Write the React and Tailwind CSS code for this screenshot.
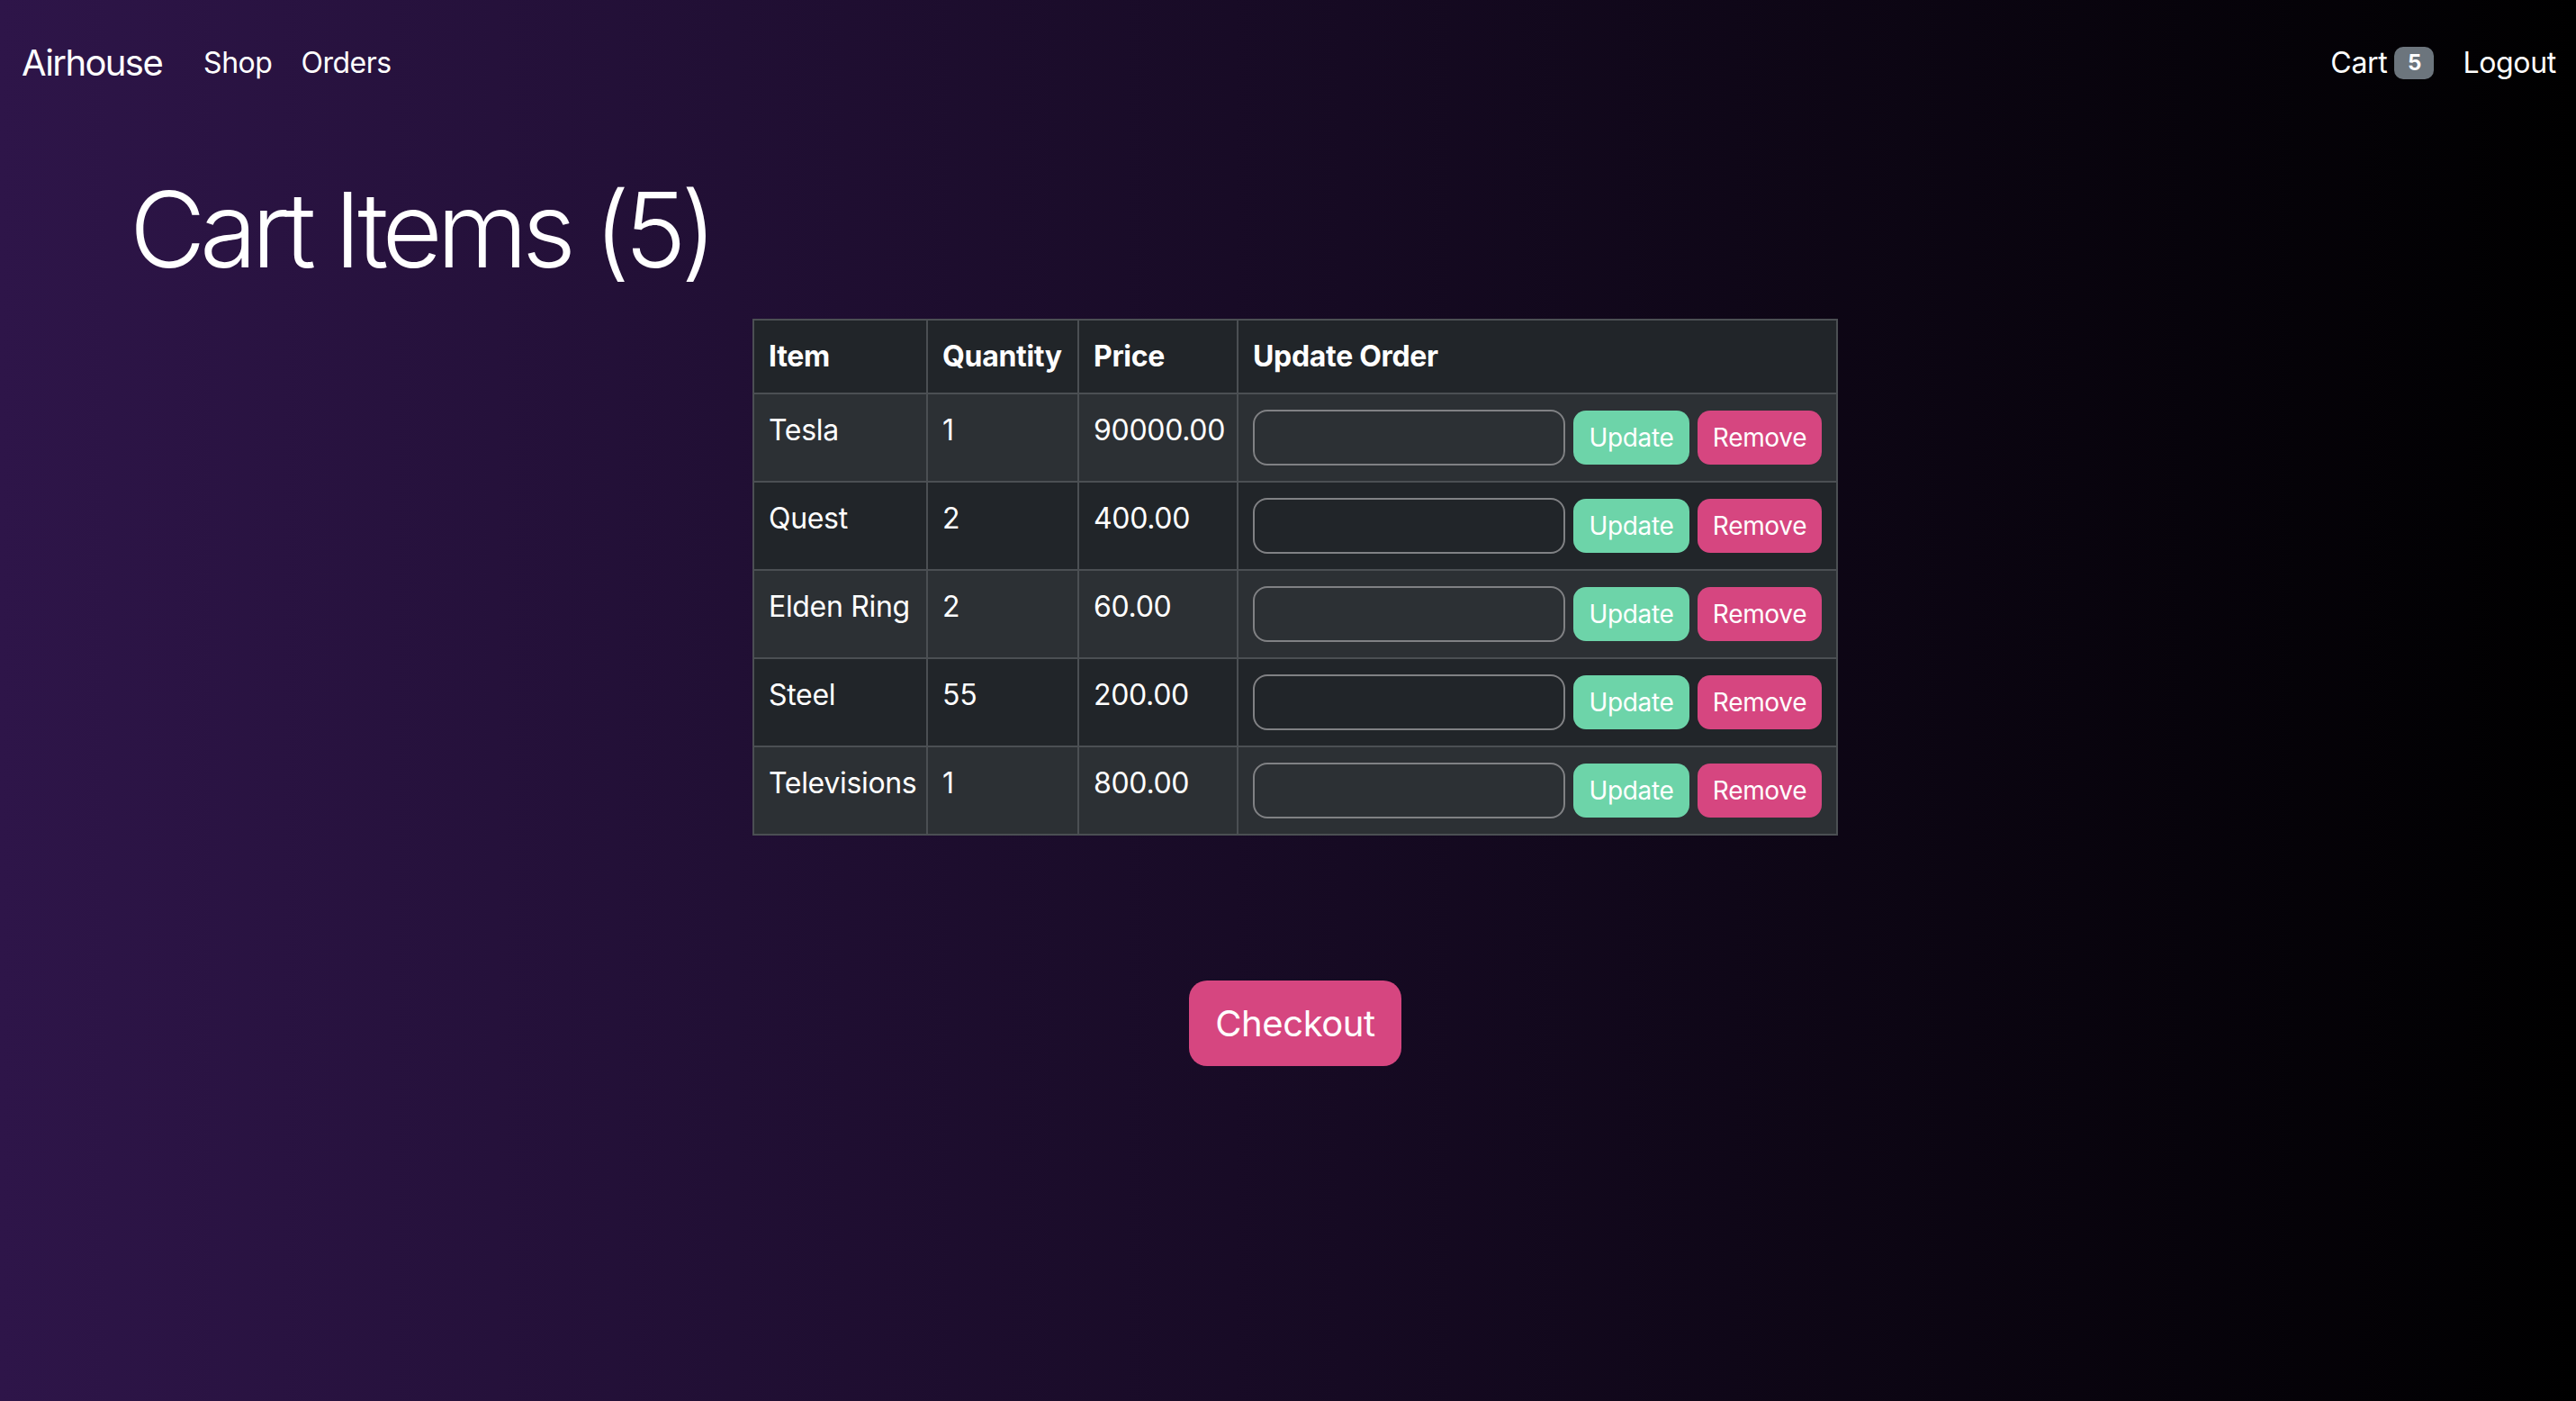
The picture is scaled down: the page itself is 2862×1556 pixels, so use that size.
import { useState } from "react";

const items = [
  { id: 1, name: "Tesla", quantity: 1, price: "90000.00" },
  { id: 2, name: "Quest", quantity: 2, price: "400.00" },
  { id: 3, name: "Elden Ring", quantity: 2, price: "60.00" },
  { id: 4, name: "Steel", quantity: 55, price: "200.00" },
  { id: 5, name: "Televisions", quantity: 1, price: "800.00" },
];

function App() {
  const [amounts, setAmounts] = useState({});

  return (
    <div className="min-h-screen w-full bg-[linear-gradient(to_right,#2e1549,#000)] font-['Inter','Liberation_Sans',sans-serif] text-white">
      {/* Navbar */}
      <nav className="flex h-[140px] items-center justify-between pl-[24px] pr-[6px]">
        <div className="flex items-center">
          <span className="mr-[30px] text-[40px] leading-[1.5] tracking-[-0.04em]">Airhouse</span>
          <a className="px-[16px] text-[32px] leading-[1.5] tracking-[-0.015em]">Shop</a>
          <a className="px-[16px] text-[32px] leading-[1.5] tracking-[-0.015em]">Orders</a>
        </div>
        <div className="flex items-center">
          <a className="flex items-center px-[16px] text-[32px] leading-[1.5] tracking-[-0.01em]">
            Cart
            <span className="ml-[8px] flex h-[36px] w-[44px] items-center justify-center rounded-[10px] bg-[#6c757d] text-[24px] font-bold leading-none">
              5
            </span>
          </a>
          <a className="px-[16px] text-[32px] leading-[1.5] tracking-[-0.01em]">Logout</a>
        </div>
      </nav>

      {/* Main Content */}
      <main>
        <h1 className="mt-[46px] mb-[29px] ml-[144px] text-[116px] font-light leading-[1.2] tracking-[-0.055em]">
          Cart Items (5)
        </h1>

        <div className="flex justify-center pl-[16px]">
          <table className="w-[1206px] table-fixed border-collapse border-2 border-[#4b4f53] text-left text-[32px] leading-[1.5] tracking-[-0.01em]">
            <thead className="bg-[#212529]">
              <tr>
                <th className="w-[193px] border-2 border-[#4b4f53] p-[16px] font-bold">Item</th>
                <th className="w-[168px] border-2 border-[#4b4f53] p-[16px] font-bold">Quantity</th>
                <th className="w-[177px] border-2 border-[#4b4f53] p-[16px] font-bold">Price</th>
                <th className="border-2 border-[#4b4f53] p-[16px] font-bold">Update Order</th>
              </tr>
            </thead>
            <tbody>
              {items.map((item, i) => (
                <tr key={item.id} className={i % 2 === 0 ? "bg-[#2c3034]" : "bg-[#212529]"}>
                  <td className="border-2 border-[#4b4f53] p-[16px] align-top">{item.name}</td>
                  <td className="border-2 border-[#4b4f53] p-[16px] align-top">{item.quantity}</td>
                  <td className="border-2 border-[#4b4f53] p-[16px] align-top">{item.price}</td>
                  <td className="border-2 border-[#4b4f53] p-[16px] align-top">
                    <div className="flex h-[64px] items-center gap-[9px]">
                      <input
                        type="text"
                        value={amounts[item.id] || ""}
                        onChange={(e) => setAmounts({ ...amounts, [item.id]: e.target.value })}
                        className="h-[62px] w-[347px] rounded-[16px] border-2 border-[#808184] bg-transparent px-[16px] text-[28px] text-white outline-none"
                      />
                      <button className="h-[60px] w-[130px] rounded-[14px] bg-[#6dd4a9] text-[28px] leading-[1.5] text-white">
                        Update
                      </button>
                      <button className="h-[60px] w-[139px] rounded-[14px] bg-[#d64680] text-[28px] leading-[1.5] text-white">
                        Remove
                      </button>
                    </div>
                  </td>
                </tr>
              ))}
            </tbody>
          </table>
        </div>

        <div className="mt-[161px] flex justify-center pl-[16px] pb-[40px]">
          <button className="h-[95px] w-[236px] rounded-[20px] bg-[#d64680] text-[40px] leading-[1.5] tracking-[-0.01em] text-white">
            Checkout
          </button>
        </div>
      </main>
    </div>
  );
}

export default App;
